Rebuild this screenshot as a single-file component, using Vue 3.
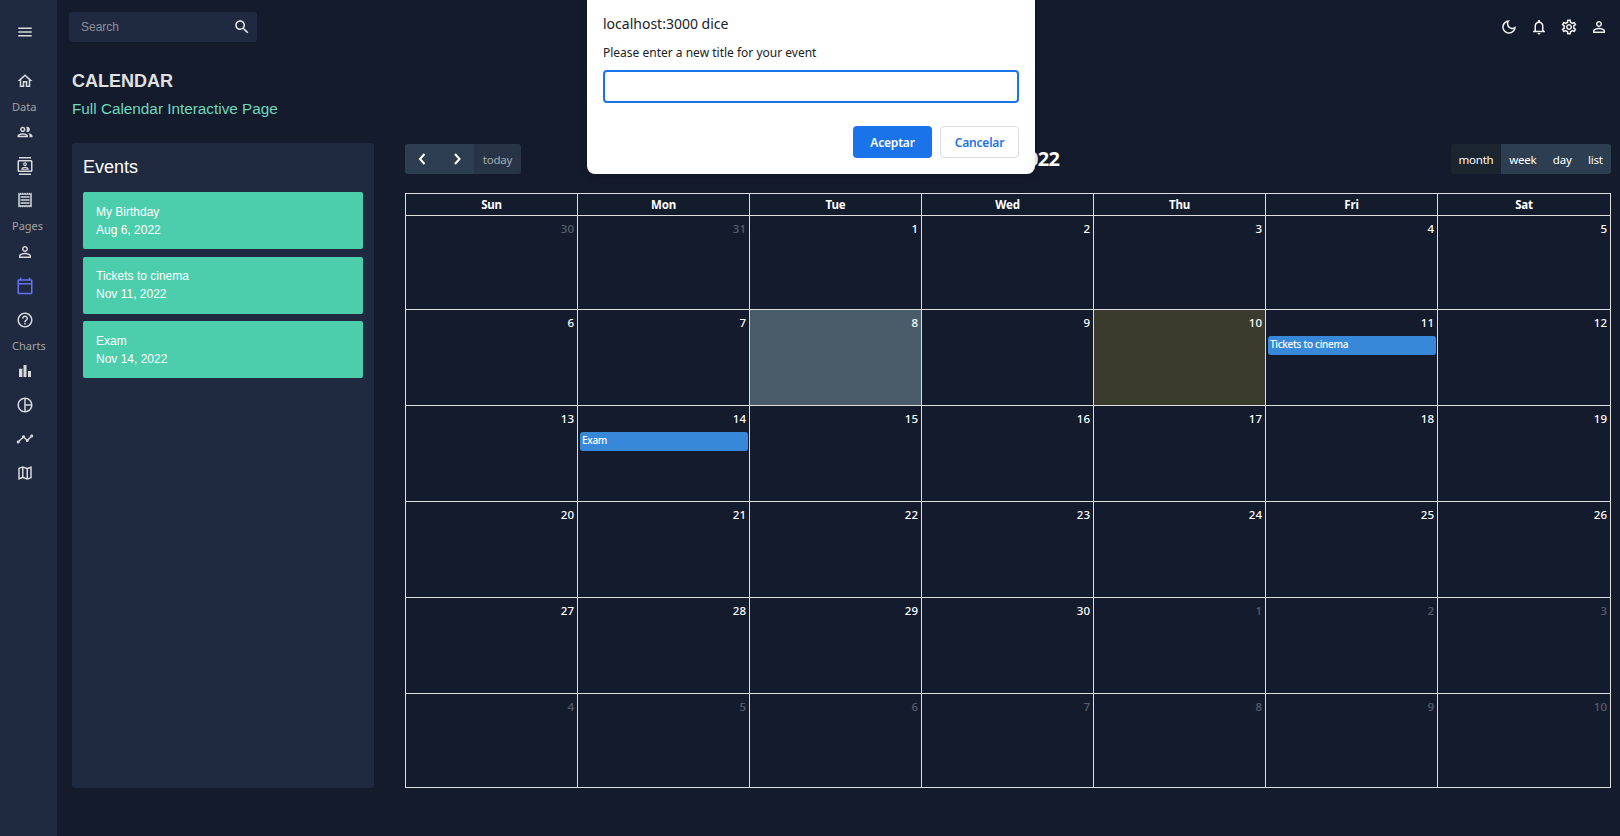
<template>
  <div class="layout">
    <aside class="sidebar">
      <div class="side-icon menu-btn">
        <svg viewBox="0 0 24 24"><path :d="icons.menu" /></svg>
      </div>
      <template v-for="item in sideItems" :key="item.label || item.icon">
        <div v-if="item.label" class="side-label" :class="{ tall: item.tall }">{{ item.label }}</div>
        <div v-else class="side-icon" :class="{ active: item.active }">
          <svg viewBox="0 0 24 24"><path :d="icons[item.icon]" /></svg>
        </div>
      </template>
    </aside>

    <main class="content">
      <header class="topbar">
        <div class="search">
          <span class="search-text">Search</span>
          <svg viewBox="0 0 24 24"><path :d="icons.search" /></svg>
        </div>
        <div class="top-icons">
          <svg v-for="name in topIcons" :key="name" viewBox="0 0 24 24"><path :d="icons[name]" /></svg>
        </div>
      </header>

      <div class="page-head">
        <h2>CALENDAR</h2>
        <h5>Full Calendar Interactive Page</h5>
      </div>

      <div class="page-row">
        <section class="events-panel">
          <h5>Events</h5>
          <div class="event-list">
            <div v-for="ev in events" :key="ev.title" class="event-card">
              <div>{{ ev.title }}</div>
              <div>{{ ev.date }}</div>
            </div>
          </div>
        </section>

        <section class="calendar">
          <div class="toolbar">
            <div class="btn-group">
              <button class="fc-btn arrow">
                <svg viewBox="0 0 16 16"><path d="M10.5 3 6 8l4.5 5" /></svg>
              </button>
              <button class="fc-btn arrow">
                <svg viewBox="0 0 16 16"><path d="m6 3 4.5 5L6 13" /></svg>
              </button>
              <button class="fc-btn today">today</button>
            </div>
            <div class="cal-title">November 2022</div>
            <div class="btn-group views">
              <button
                v-for="v in views"
                :key="v"
                class="fc-btn view"
                :class="{ current: v === 'month' }"
              >
                {{ v }}
              </button>
            </div>
          </div>

          <div class="grid">
            <div v-for="d in weekdays" :key="d" class="head-cell">{{ d }}</div>
            <div
              v-for="cell in cells"
              :key="cell.key"
              class="day"
              :class="{ other: cell.other, selected: cell.selected, now: cell.now }"
            >
              <div class="num">{{ cell.n }}</div>
              <div v-if="cell.event" class="cal-event">{{ cell.event }}</div>
            </div>
          </div>
        </section>
      </div>
    </main>

    <!-- browser prompt sits over the page -->
    <div class="prompt">
      <div class="prompt-origin">localhost:3000 dice</div>
      <div class="prompt-msg">Please enter a new title for your event</div>
      <input class="prompt-input" type="text" />
      <div class="prompt-actions">
        <button class="ok">Aceptar</button>
        <button class="cancel">Cancelar</button>
      </div>
    </div>
  </div>
</template>

<script setup>
const icons = {
  menu: "M3 18h18v-2H3v2zm0-5h18v-2H3v2zm0-7v2h18V6H3z",
  search: "M15.5 14h-.79l-.28-.27C15.41 12.59 16 11.11 16 9.5 16 5.91 13.09 3 9.5 3S3 5.91 3 9.5 5.91 16 9.5 16c1.61 0 3.09-.59 4.23-1.57l.27.28v.79l5 4.99L20.49 19l-4.99-5zm-6 0C7.01 14 5 11.99 5 9.5S7.01 5 9.5 5 14 7.01 14 9.5 11.99 14 9.5 14z",
  home: "M12 5.69l5 4.5V18h-2v-6H9v6H7v-7.81l5-4.5M12 3L2 12h3v8h6v-6h2v6h6v-8h3L12 3z",
  people: "M9 13.75c-2.34 0-7 1.17-7 3.5V19h14v-1.75c0-2.33-4.66-3.5-7-3.5zM4.34 17c.84-.58 2.87-1.25 4.66-1.25s3.82.67 4.66 1.25H4.34zM9 12c1.93 0 3.5-1.57 3.5-3.5S10.93 5 9 5 5.5 6.57 5.5 8.5 7.07 12 9 12zm0-5c.83 0 1.5.67 1.5 1.5S9.83 10 9 10s-1.5-.67-1.5-1.5S8.17 7 9 7zm7.04 6.81c1.16.84 1.96 1.96 1.96 3.44V19h4v-1.75c0-2.02-3.5-3.17-5.96-3.44zM15 12c1.93 0 3.5-1.57 3.5-3.5S16.93 5 15 5c-.54 0-1.04.13-1.5.35.63.89 1 1.98 1 3.15s-.37 2.26-1 3.15c.46.22.96.35 1.5.35z",
  contacts: "M20 0H4v2h16V0zM4 24h16v-2H4v2zM20 4H4c-1.1 0-2 .9-2 2v12c0 1.1.9 2 2 2h16c1.1 0 2-.9 2-2V6c0-1.1-.9-2-2-2zm0 14H4V6h16v12zm-8-6c1.38 0 2.5-1.12 2.5-2.5S13.38 7 12 7 9.5 8.12 9.5 9.5 10.62 12 12 12zm0-3.5c.55 0 1 .45 1 1s-.45 1-1 1-1-.45-1-1 .45-1 1-1zm5 7.49C17 13.9 13.69 13 12 13s-5 .9-5 2.99V17h10v-1.01zm-8.19-.49c.61-.52 2.03-1 3.19-1 1.17 0 2.59.48 3.2 1H8.81z",
  receipt: "M19.5 3.5 18 2l-1.5 1.5L15 2l-1.5 1.5L12 2l-1.5 1.5L9 2 7.5 3.5 6 2 4.5 3.5 3 2v20l1.5-1.5L6 22l1.5-1.5L9 22l1.5-1.5L12 22l1.5-1.5L15 22l1.5-1.5L18 22l1.5-1.5L21 22V2l-1.5 1.5zM19 19.09H5V4.91h14v14.18zM6 15h12v2H6zm0-4h12v2H6zm0-4h12v2H6z",
  person: "M12 5.9c1.16 0 2.1.94 2.1 2.1s-.94 2.1-2.1 2.1S9.9 9.16 9.9 8s.94-2.1 2.1-2.1m0 9c2.97 0 6.1 1.46 6.1 2.1v1.1H5.9V17c0-.64 3.13-2.1 6.1-2.1M12 4C9.79 4 8 5.79 8 8s1.79 4 4 4 4-1.79 4-4-1.79-4-4-4zm0 9c-2.67 0-8 1.34-8 4v3h16v-3c0-2.66-5.33-4-8-4z",
  calendar: "M20 3h-1V1h-2v2H7V1H5v2H4c-1.1 0-2 .9-2 2v16c0 1.1.9 2 2 2h16c1.1 0 2-.9 2-2V5c0-1.1-.9-2-2-2zm0 18H4V10h16v11zm0-13H4V5h16v3z",
  help: "M11 18h2v-2h-2v2zm1-16C6.48 2 2 6.48 2 12s4.48 10 10 10 10-4.48 10-10S17.52 2 12 2zm0 18c-4.41 0-8-3.59-8-8s3.59-8 8-8 8 3.59 8 8-3.59 8-8 8zm0-14c-2.21 0-4 1.79-4 4h2c0-1.1.9-2 2-2s2 .9 2 2c0 2-3 1.75-3 5h2c0-2.25 3-2.5 3-5 0-2.21-1.79-4-4-4z",
  bar: "M4 9h4.5v11H4zM10 4h4v16h-4zm6 8h4v8h-4z",
  pie: "M12 2C6.5 2 2 6.5 2 12s4.5 10 10 10 10-4.5 10-10S17.5 2 12 2zm1 2.07c3.61.45 6.48 3.33 6.93 6.93H13V4.07zM4 12c0-4.06 3.07-7.44 7-7.93v15.87c-3.93-.5-7-3.88-7-7.94zm9 7.93V13h6.93c-.45 3.61-3.32 6.48-6.93 6.93z",
  timeline: "M23 8c0 1.1-.9 2-2 2-.18 0-.35-.02-.51-.07l-3.56 3.55c.05.16.07.34.07.52 0 1.1-.9 2-2 2s-2-.9-2-2c0-.18.02-.36.07-.52l-2.55-2.55c-.16.05-.34.07-.52.07s-.36-.02-.52-.07l-4.55 4.56c.05.16.07.33.07.51 0 1.1-.9 2-2 2s-2-.9-2-2 .9-2 2-2c.18 0 .35.02.51.07l4.56-4.55C8.02 9.36 8 9.18 8 9c0-1.1.9-2 2-2s2 .9 2 2c0 .18-.02.36-.07.52l2.55 2.55c.16-.05.34-.07.52-.07s.36.02.52.07l3.55-3.56C19.02 8.35 19 8.18 19 8c0-1.1.9-2 2-2s2 .9 2 2z",
  map: "m20.5 3-.16.03L15 5.1 9 3 3.36 4.9c-.21.07-.36.25-.36.48V20.5c0 .28.22.5.5.5l.16-.03L9 18.9l6 2.1 5.64-1.9c.21-.07.36-.25.36-.48V3.5c0-.28-.22-.5-.5-.5zM10 5.47l4 1.4v11.66l-4-1.4V5.47zm-5 .99 3-1.01v11.7l-3 1.16V6.46zm14 11.08-3 1.01V6.86l3-1.16v11.84z",
  moon: "M9.37 5.51c-.18.64-.27 1.31-.27 1.99 0 4.08 3.32 7.4 7.4 7.4.68 0 1.35-.09 1.99-.27C17.45 17.19 14.93 19 12 19c-3.86 0-7-3.14-7-7 0-2.93 1.81-5.45 4.37-6.49zM12 3c-4.97 0-9 4.03-9 9s4.03 9 9 9 9-4.03 9-9c0-.46-.04-.92-.1-1.36-.98 1.37-2.58 2.26-4.4 2.26-2.98 0-5.4-2.42-5.4-5.4 0-1.81.89-3.42 2.26-4.4-.44-.06-.9-.1-1.36-.1z",
  bell: "M12 22c1.1 0 2-.9 2-2h-4c0 1.1.9 2 2 2zm6-6v-5c0-3.07-1.63-5.64-4.5-6.32V4c0-.83-.67-1.5-1.5-1.5s-1.5.67-1.5 1.5v.68C7.64 5.36 6 7.92 6 11v5l-2 2v1h16v-1l-2-2zm-2 1H8v-6c0-2.48 1.51-4.5 4-4.5s4 2.02 4 4.5v6z",
  gear: "M19.43 12.98c.04-.32.07-.64.07-.98 0-.34-.03-.66-.07-.98l2.11-1.65c.19-.15.24-.42.12-.64l-2-3.46c-.09-.16-.26-.25-.44-.25-.06 0-.12.01-.17.03l-2.49 1c-.52-.4-1.08-.73-1.69-.98l-.38-2.65C14.46 2.18 14.25 2 14 2h-4c-.25 0-.46.18-.49.42l-.38 2.65c-.61.25-1.17.59-1.69.98l-2.49-1c-.06-.02-.12-.03-.18-.03-.17 0-.34.09-.43.25l-2 3.46c-.13.22-.07.49.12.64l2.11 1.65c-.04.32-.07.65-.07.98 0 .33.03.66.07.98l-2.11 1.65c-.19.15-.24.42-.12.64l2 3.46c.09.16.26.25.44.25.06 0 .12-.01.17-.03l2.49-1c.52.4 1.08.73 1.69.98l.38 2.65c.03.24.24.42.49.42h4c.25 0 .46-.18.49-.42l.38-2.65c.61-.25 1.17-.59 1.69-.98l2.49 1c.06.02.12.03.18.03.17 0 .34-.09.43-.25l2-3.46c.12-.22.07-.49-.12-.64l-2.11-1.65zm-1.98-1.71c.04.31.05.52.05.73 0 .21-.02.43-.05.73l-.14 1.13.89.7 1.08.84-.7 1.21-1.27-.51-1.04-.42-.9.68c-.43.32-.84.56-1.25.73l-1.06.43-.16 1.13-.2 1.35h-1.4l-.19-1.35-.16-1.13-1.06-.43c-.43-.18-.83-.41-1.23-.71l-.91-.7-1.06.43-1.27.51-.7-1.21 1.08-.84.89-.7-.14-1.13c-.03-.31-.05-.54-.05-.74s.02-.43.05-.73l.14-1.13-.89-.7-1.08-.84.7-1.21 1.27.51 1.04.42.9-.68c.43-.32.84-.56 1.25-.73l1.06-.43.16-1.13.2-1.35h1.39l.19 1.35.16 1.13 1.06.43c.43.18.83.41 1.23.71l.91.7 1.06-.43 1.27-.51.7 1.21-1.07.85-.89.7.14 1.13zM12 8c-2.21 0-4 1.79-4 4s1.79 4 4 4 4-1.79 4-4-1.79-4-4-4zm0 6c-1.1 0-2-.9-2-2s.9-2 2-2 2 .9 2 2-.9 2-2 2z",
};

const sideItems = [
  { icon: "home" },
  { label: "Data" },
  { icon: "people" },
  { icon: "contacts" },
  { icon: "receipt" },
  { label: "Pages", tall: true },
  { icon: "person" },
  { icon: "calendar", active: true },
  { icon: "help" },
  { label: "Charts" },
  { icon: "bar" },
  { icon: "pie" },
  { icon: "timeline" },
  { icon: "map" },
];

const topIcons = ["moon", "bell", "gear", "person"];

const events = [
  { title: "My Birthday", date: "Aug 6, 2022" },
  { title: "Tickets to cinema", date: "Nov 11, 2022" },
  { title: "Exam", date: "Nov 14, 2022" },
];

const views = ["month", "week", "day", "list"];
const weekdays = ["Sun", "Mon", "Tue", "Wed", "Thu", "Fri", "Sat"];

// Nov 2022 starts on a Tuesday, so the grid opens on Oct 30
const cells = [];
for (let i = 0; i < 42; i++) {
  const n = i < 2 ? 30 + i : i < 32 ? i - 1 : i - 31;
  const other = i < 2 || i >= 32;
  const cell = { key: i, n, other };
  if (!other && n === 8) cell.selected = true;
  if (!other && n === 10) cell.now = true;
  if (!other && n === 11) cell.event = "Tickets to cinema";
  if (!other && n === 14) cell.event = "Exam";
  cells.push(cell);
}
</script>

<style scoped>
.layout {
  display: flex;
  height: 836px;
  overflow: hidden;
  position: relative;
  background: #141b2d;
  font-family: "Liberation Sans", Arial, sans-serif;
  color: #e0e0e0;
}

/* sidebar */
.sidebar {
  width: 57px;
  flex: none;
  padding-top: 15px;
  box-sizing: border-box;
  background: #1f2a40;
}
.side-icon {
  height: 34px;
  padding-left: 16px;
  display: flex;
  align-items: center;
}
.side-icon svg {
  width: 18px;
  height: 18px;
  fill: #d8d9db;
}
.side-icon.active svg {
  fill: #6870fa;
}
.menu-btn {
  margin-bottom: 15px;
}
.side-label {
  height: 17px;
  line-height: 17px;
  padding-left: 12px;
  font-family: "Noto Sans", sans-serif;
  font-size: 11px;
  color: #a3a3a3;
}
.side-label.tall {
  height: 18px;
}

/* main */
.content {
  flex: 1;
  min-width: 0;
}
.topbar {
  display: flex;
  justify-content: space-between;
  align-items: center;
  padding: 12px;
}
.search {
  width: 188px;
  height: 30px;
  box-sizing: border-box;
  padding: 0 6px 0 12px;
  display: flex;
  align-items: center;
  justify-content: space-between;
  background: #1f2a40;
  border-radius: 3px;
}
.search-text {
  font-size: 12px;
  color: #8b909c;
}
.search svg {
  width: 18px;
  height: 18px;
  fill: #e8e8e8;
}
.top-icons {
  display: flex;
  gap: 12px;
}
.top-icons svg {
  width: 18px;
  height: 18px;
  fill: #f0f0f0;
}

.page-head {
  padding: 16px 0 25px 15px;
}
.page-head h2 {
  margin: 0;
  font-size: 18px;
  line-height: 22px;
  font-weight: 700;
  color: #e0e0e0;
}
.page-head h5 {
  margin: 7px 0 0;
  font-size: 15.3px;
  line-height: 19px;
  font-weight: 400;
  color: #70d8bd;
}

.page-row {
  display: flex;
  padding-left: 15px;
  gap: 31px;
}

.events-panel {
  width: 302px;
  flex: none;
  box-sizing: border-box;
  padding: 13px 11px 0;
  background: #1f2a40;
  border-radius: 3px;
}
.events-panel h5 {
  margin: 0 0 14px;
  font-size: 18px;
  line-height: 22px;
  font-weight: 400;
  color: #fff;
}
.event-card {
  padding: 11px 12px 10px 13px;
  margin-bottom: 7px;
  background: #4cceac;
  border-radius: 2px;
  color: #fff;
  font-size: 12px;
  line-height: 18px;
}
.event-card:first-child {
  margin-bottom: 8px;
}
.event-card:nth-child(2) {
  padding-top: 10px;
  padding-bottom: 11px;
}

/* full calendar */
.calendar {
  flex: 1;
  padding-top: 1px;
  font-family: "Noto Sans", sans-serif;
  color: #fff;
}
.toolbar {
  width: 1206px;
  height: 30px;
  margin-bottom: 19px;
  display: flex;
  justify-content: space-between;
  align-items: center;
}
.cal-title {
  font-size: 20px;
  font-weight: 700;
  letter-spacing: -0.7px;
  padding-bottom: 2px;
}
.btn-group {
  display: flex;
  height: 30px;
  border-radius: 3px;
  overflow: hidden;
}
.btn-group.views {
  width: 160px;
}
.fc-btn {
  border: none;
  padding: 0;
  margin: 0;
  background: #2c3e50;
  color: #fff;
  font-family: inherit;
  font-size: 11.5px;
  letter-spacing: -0.2px;
}
.fc-btn.arrow {
  width: 34.5px;
  display: flex;
  align-items: center;
  justify-content: center;
}
.fc-btn.arrow svg {
  width: 16px;
  height: 16px;
  fill: none;
  stroke: #fff;
  stroke-width: 2;
}
.fc-btn.today {
  width: 47px;
  background: #263445;
  color: #a5abb3;
}
.fc-btn.view {
  flex: 1 1 auto;
}
.fc-btn.current {
  background: #1a252f;
  flex: none;
  width: 50px;
}

.grid {
  display: grid;
  grid-template-columns: repeat(6, 172px) 173px;
  grid-template-rows: 22px 94px 96px 96px 96px 96px 94px;
  border-top: 1px solid #ddd;
  border-left: 1px solid #ddd;
  width: 1206px;
  box-sizing: border-box;
}
.head-cell,
.day {
  border-right: 1px solid #ddd;
  border-bottom: 1px solid #ddd;
  box-sizing: border-box;
  min-width: 0;
}
.head-cell {
  text-align: center;
  font-size: 11.5px;
  font-weight: 700;
  line-height: 21px;
  letter-spacing: -0.2px;
}
.num {
  height: 26px;
  box-sizing: border-box;
  padding: 4px 3px 0 0;
  text-align: right;
  font-size: 11.5px;
  font-weight: 500;
  line-height: 18px;
}
.day.other .num {
  color: #fff;
  opacity: 0.28;
}
.day.selected {
  background: #4a5b6a;
}
.day.now {
  background: #3a3b2d;
}
.cal-event {
  height: 19px;
  margin: 0 1px 0 2px;
  padding-left: 2px;
  background: #3788d8;
  border-radius: 3px;
  font-size: 10px;
  font-weight: 500;
  letter-spacing: -0.3px;
  line-height: 17px;
  white-space: nowrap;
}

/* prompt dialog */
.prompt {
  position: absolute;
  top: 0;
  left: 587px;
  width: 448px;
  height: 174px;
  box-sizing: border-box;
  padding: 14px 16px 0;
  background: #fff;
  border-radius: 0 0 8px 8px;
  box-shadow: 0 2px 8px rgba(0, 0, 0, 0.25);
  font-family: "Noto Sans", sans-serif;
  color: #202124;
}
.prompt-origin {
  font-size: 14px;
  line-height: 20px;
}
.prompt-msg {
  margin-top: 10px;
  font-size: 12px;
  line-height: 18px;
}
.prompt-input {
  display: block;
  width: 416px;
  height: 33px;
  margin-top: 8px;
  box-sizing: border-box;
  background: #fff;
  border: 2px solid #1a73e8;
  border-radius: 4px;
  outline: none;
}
.prompt-actions {
  display: flex;
  justify-content: flex-end;
  gap: 8px;
  margin-top: 23px;
}
.prompt-actions button {
  width: 79px;
  height: 32px;
  padding: 0;
  font-family: inherit;
  font-size: 12px;
  font-weight: 600;
  letter-spacing: -0.2px;
  border-radius: 4px;
  cursor: pointer;
}
.ok {
  background: #1a73e8;
  color: #fff;
  border: none;
}
.cancel {
  background: #fff;
  color: #1a73e8;
  border: 1px solid #dadce0;
}
</style>

<style>
html,
body {
  margin: 0;
  background: #141b2d;
  overflow: hidden;
}
</style>
